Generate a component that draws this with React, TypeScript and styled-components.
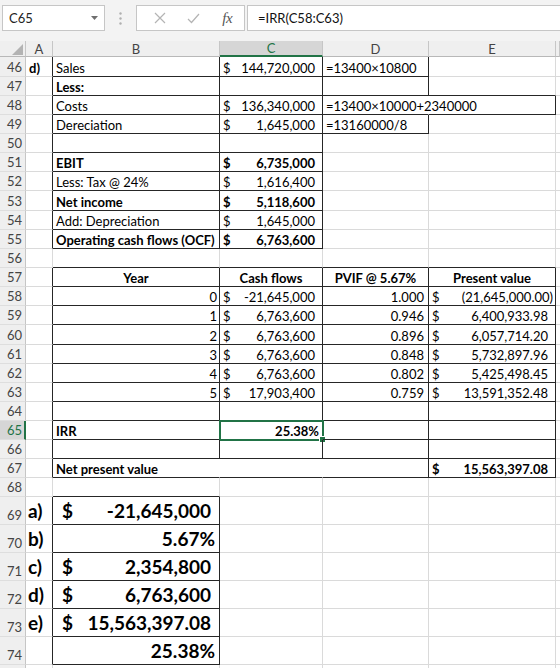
import React from 'react'
import styled, { createGlobalStyle, css } from 'styled-components'

const GREEN = '#217346'
const DARK = '#262626'
const GRID = '#dadada'
const HEAD_BG = '#efefef'
const HEAD_LINE = '#c6c6c6'
const COLS = '26px 27px 167px 103px 106px 127px 1fr'

const GlobalStyle = createGlobalStyle`
  html, body { margin: 0; padding: 0; background: #ffffff; }
  body { font-family: Lato, "Open Sans", sans-serif; color: #000; }
`

type Align = 'l' | 'r' | 'c'

type CellData = {
  t?: string
  cur?: boolean
  al?: Align
  b?: boolean
  R?: boolean
  B?: boolean
  open?: boolean
  pl?: number
  pr?: number
  sel?: boolean
}

type RowData = { n: number; h: number; big?: boolean; hideNum?: boolean; cells: CellData[] }

const box = { R: true, B: true }
const money = (t: string, b = false, pr = 7): CellData => ({ t, b, pr, cur: true, ...box })
const label = (t: string, b = false): CellData => ({ t, b, ...box })
const num = (t: string, pr = 3): CellData => ({ t, al: 'r', pr, ...box })

const rows: RowData[] = [
  { n: 46, h: 20, cells: [{ t: 'd)', b: true, R: true }, label('Sales'), money('144,720,000'), label('=13400×10800'), {}] },
  { n: 47, h: 19, cells: [{ R: true }, label('Less:', true), box, box, { B: true }] },
  { n: 48, h: 19, cells: [{ R: true }, label('Costs'), money('136,340,000'), { t: '=13400×10000+2340000', B: true, open: true }, box] },
  { n: 49, h: 19, cells: [{ R: true }, label('Dereciation'), money('1,645,000'), label('=13160000/8'), {}] },
  { n: 50, h: 19, cells: [{ R: true }, box, box, {}, {}] },
  { n: 51, h: 19, cells: [{ R: true }, label('EBIT', true), money('6,735,000', true), {}, {}] },
  { n: 52, h: 19, cells: [{ R: true }, label('Less: Tax @ 24%'), money('1,616,400'), {}, {}] },
  { n: 53, h: 20, cells: [{ R: true }, label('Net income', true), money('5,118,600', true), {}, {}] },
  { n: 54, h: 19, cells: [{ R: true }, label('Add: Depreciation'), money('1,645,000'), {}, {}] },
  { n: 55, h: 19, cells: [{ R: true }, label('Operating cash flows (OCF)', true), money('6,763,600', true), {}, {}] },
  { n: 56, h: 19, cells: [{}, { B: true }, { B: true }, { B: true }, { B: true }] },
  {
    n: 57,
    h: 19,
    cells: [
      { R: true },
      { t: 'Year', b: true, al: 'c', ...box },
      { t: 'Cash flows', b: true, al: 'c', ...box },
      { t: 'PVIF @ 5.67%', b: true, al: 'c', ...box },
      { t: 'Present value', b: true, al: 'c', ...box },
    ],
  },
  { n: 58, h: 19, cells: [{ R: true }, num('0', 2), money('-21,645,000'), num('1.000', 4), money('(21,645,000.00)', false, 2)] },
  { n: 59, h: 19, cells: [{ R: true }, num('1', 2), money('6,763,600'), num('0.946', 4), money('6,400,933.98')] },
  { n: 60, h: 20, cells: [{ R: true }, num('2', 2), money('6,763,600'), num('0.896', 4), money('6,057,714.20')] },
  { n: 61, h: 19, cells: [{ R: true }, num('3', 2), money('6,763,600'), num('0.848', 4), money('5,732,897.96')] },
  { n: 62, h: 19, cells: [{ R: true }, num('4', 2), money('6,763,600'), num('0.802', 4), money('5,425,498.45')] },
  { n: 63, h: 19, cells: [{ R: true }, num('5', 2), money('17,903,400'), num('0.759', 4), money('13,591,352.48')] },
  { n: 64, h: 19, cells: [{ R: true }, box, box, box, box] },
  { n: 65, h: 19, cells: [{ R: true }, label('IRR', true), { t: '25.38%', b: true, al: 'r', pr: 3, sel: true, ...box }, box, box] },
  { n: 66, h: 19, cells: [{ R: true }, box, box, box, box] },
  { n: 67, h: 19, cells: [{ R: true }, { t: 'Net present value', b: true, B: true, open: true }, { B: true, open: true }, box, money('15,563,397.08', true)] },
  { n: 68, h: 19, cells: [{}, { B: true }, {}, {}, {}] },
  { n: 69, h: 28, big: true, cells: [{ t: 'a)', b: true, R: true }, money('-21,645,000', true, 8), {}, {}, {}] },
  { n: 70, h: 28, big: true, cells: [{ t: 'b)', b: true, R: true }, { t: '5.67%', b: true, al: 'r', pr: 4, ...box }, {}, {}, {}] },
  { n: 71, h: 28, big: true, cells: [{ t: 'c)', b: true, R: true }, money('2,354,800', true, 8), {}, {}, {}] },
  { n: 72, h: 28, big: true, cells: [{ t: 'd)', b: true, R: true }, money('6,763,600', true, 8), {}, {}, {}] },
  { n: 73, h: 28, big: true, cells: [{ t: 'e)', b: true, R: true }, money('15,563,397.08', true, 8), {}, {}, {}] },
  { n: 74, h: 28, big: true, cells: [{ R: true }, { t: '25.38%', b: true, al: 'r', pr: 4, ...box }, {}, {}, {}] },
  // only a sliver of row 75 shows at the bottom edge
  { n: 75, h: 19, hideNum: true, cells: [{}, {}, {}, {}, {}] },
]

const Window = styled.div`
  width: 560px;
  height: 668px;
  overflow: hidden;
  background: #fff;
`

const FormulaBar = styled.div`
  height: 41px;
  box-sizing: border-box;
  padding: 5px 0 0 2px;
  display: flex;
  align-items: flex-start;
  background: #f3f3f3;
`

const NameBox = styled.div`
  width: 103px;
  height: 26px;
  box-sizing: border-box;
  border: 1px solid #c6c6c6;
  background: #fff;
  display: flex;
  align-items: center;
  justify-content: space-between;
  padding: 0 6px 0 6px;
  font-size: 13px;
  color: #222;
`

const Grip = styled.div`
  width: 31px;
  height: 26px;
  display: flex;
  align-items: center;
  justify-content: center;
`

const EditBox = styled.div`
  width: 109px;
  height: 26px;
  box-sizing: border-box;
  border: 1px solid #c6c6c6;
  background: #fff;
  display: flex;
  align-items: center;
  padding-left: 6px;
`

const IconSlot = styled.div`
  width: 34px;
  height: 24px;
  display: flex;
  align-items: center;
  justify-content: center;
`

const Fx = styled.span`
  font-family: "Liberation Serif", serif;
  font-style: italic;
  font-size: 15px;
  color: #555;
  letter-spacing: -0.5px;
`

const FormulaInput = styled.div`
  flex: 1;
  height: 26px;
  margin-left: 2px;
  box-sizing: border-box;
  border: 1px solid #c6c6c6;
  border-right: none;
  background: #fff;
  display: flex;
  align-items: center;
  padding-left: 10px;
  font-size: 13px;
  color: #111;
`

const Line = styled.div<{ $h: number }>`
  display: grid;
  grid-template-columns: ${COLS};
  height: ${({ $h }) => $h}px;
`

const ColHead = styled.div<{ $sel?: boolean }>`
  box-sizing: border-box;
  background: ${HEAD_BG};
  border-right: 1px solid ${HEAD_LINE};
  border-bottom: 1px solid #b8b8b8;
  font-size: 13px;
  color: #444;
  display: flex;
  align-items: center;
  justify-content: center;
  overflow: hidden;
  ${({ $sel }) =>
    $sel &&
    css`
      background: #d6d6d6;
      color: ${GREEN};
      border-bottom: 2px solid ${GREEN};
    `}
`

const Corner = styled(ColHead)`
  align-items: flex-end;
  justify-content: flex-end;
  padding: 0 2px 1px 0;
`

const RowHead = styled.div<{ $sel?: boolean }>`
  box-sizing: border-box;
  background: ${HEAD_BG};
  border-right: 1px solid ${HEAD_LINE};
  border-bottom: 1px solid #dedede;
  font-size: 13px;
  color: #444;
  display: flex;
  align-items: flex-end;
  justify-content: flex-end;
  padding: 0 3px 1px 0;
  ${({ $sel }) =>
    $sel &&
    css`
      background: #d6d6d6;
      color: ${GREEN};
      border-right: 2px solid ${GREEN};
      padding-right: 2px;
    `}
`

const justify = { l: 'flex-start', r: 'flex-end', c: 'center' }

const Cell = styled.div<{
  $R?: boolean
  $B?: boolean
  $open?: boolean
  $al: Align
  $cur?: boolean
  $b?: boolean
  $big?: boolean
  $pl: number
  $pr: number
}>`
  position: relative;
  box-sizing: border-box;
  min-width: 0;
  display: flex;
  align-items: flex-end;
  justify-content: ${({ $al, $cur }) => ($cur ? 'space-between' : justify[$al])};
  padding: 0 ${({ $pr }) => $pr}px 0 ${({ $pl }) => $pl}px;
  border-right: 1px solid ${({ $R, $open }) => ($R ? DARK : $open ? 'transparent' : GRID)};
  border-bottom: 1px solid ${({ $B }) => ($B ? DARK : GRID)};
  white-space: nowrap;
  font-size: ${({ $big }) => ($big ? 19 : 13)}px;
  line-height: ${({ $big }) => ($big ? 26 : 16)}px;
  font-weight: ${({ $b }) => ($b ? 700 : 400)};
`

const Selection = styled.div`
  position: absolute;
  left: -1px;
  top: -1px;
  right: -2px;
  bottom: -2px;
  border: 2px solid ${GREEN};
  pointer-events: none;
`

const Handle = styled.div`
  position: absolute;
  right: -4px;
  bottom: -4px;
  width: 5px;
  height: 5px;
  background: ${GREEN};
  border: 1px solid #fff;
`

function SheetCell({ c, big, col }: { c: CellData; big?: boolean; col: number }) {
  const defaultPl = big ? (col === 0 ? 2 : 9) : 3
  return (
    <Cell
      $R={c.R}
      $B={c.B}
      $open={c.open}
      $al={c.al ?? 'l'}
      $cur={c.cur}
      $b={c.b}
      $big={big}
      $pl={c.pl ?? defaultPl}
      $pr={c.pr ?? 3}
    >
      {c.cur ? (
        <>
          <span>$</span>
          <span>{c.t}</span>
        </>
      ) : (
        c.t
      )}
      {c.sel && (
        <Selection>
          <Handle />
        </Selection>
      )}
    </Cell>
  )
}

export default function App() {
  return (
    <Window>
      <GlobalStyle />
      <FormulaBar>
        <NameBox>
          C65
          <svg width="7" height="4" viewBox="0 0 7 4">
            <polygon points="0,0 7,0 3.5,4" fill="#6f6f6f" />
          </svg>
        </NameBox>
        <Grip>
          <svg width="3" height="13" viewBox="0 0 3 13">
            <circle cx="1.5" cy="1.5" r="1.2" fill="#b0b0b0" />
            <circle cx="1.5" cy="6.5" r="1.2" fill="#b0b0b0" />
            <circle cx="1.5" cy="11.5" r="1.2" fill="#b0b0b0" />
          </svg>
        </Grip>
        <EditBox>
          <IconSlot>
            <svg width="12" height="12" viewBox="0 0 12 12">
              <path d="M1 1 L11 11 M11 1 L1 11" stroke="#b4b4b4" strokeWidth="1.2" fill="none" />
            </svg>
          </IconSlot>
          <IconSlot>
            <svg width="13" height="11" viewBox="0 0 13 11">
              <path d="M1 6 L4.5 9.5 L12 1" stroke="#b4b4b4" strokeWidth="1.2" fill="none" />
            </svg>
          </IconSlot>
          <IconSlot>
            <Fx>fx</Fx>
          </IconSlot>
        </EditBox>
        <FormulaInput>=IRR(C58:C63)</FormulaInput>
      </FormulaBar>

      <Line $h={16}>
        <Corner>
          <svg width="11" height="11" viewBox="0 0 11 11">
            <polygon points="11,0 11,11 0,11" fill="#b3b3b3" />
          </svg>
        </Corner>
        <ColHead>A</ColHead>
        <ColHead>B</ColHead>
        <ColHead $sel>C</ColHead>
        <ColHead>D</ColHead>
        <ColHead>E</ColHead>
        <ColHead />
      </Line>

      {rows.map((r) => (
        <Line key={r.n} $h={r.h}>
          <RowHead $sel={r.n === 65}>{r.hideNum ? null : r.n}</RowHead>
          {r.cells.map((c, i) => (
            <SheetCell key={i} c={c} big={r.big} col={i} />
          ))}
          <SheetCell c={{}} col={5} />
        </Line>
      ))}
    </Window>
  )
}
